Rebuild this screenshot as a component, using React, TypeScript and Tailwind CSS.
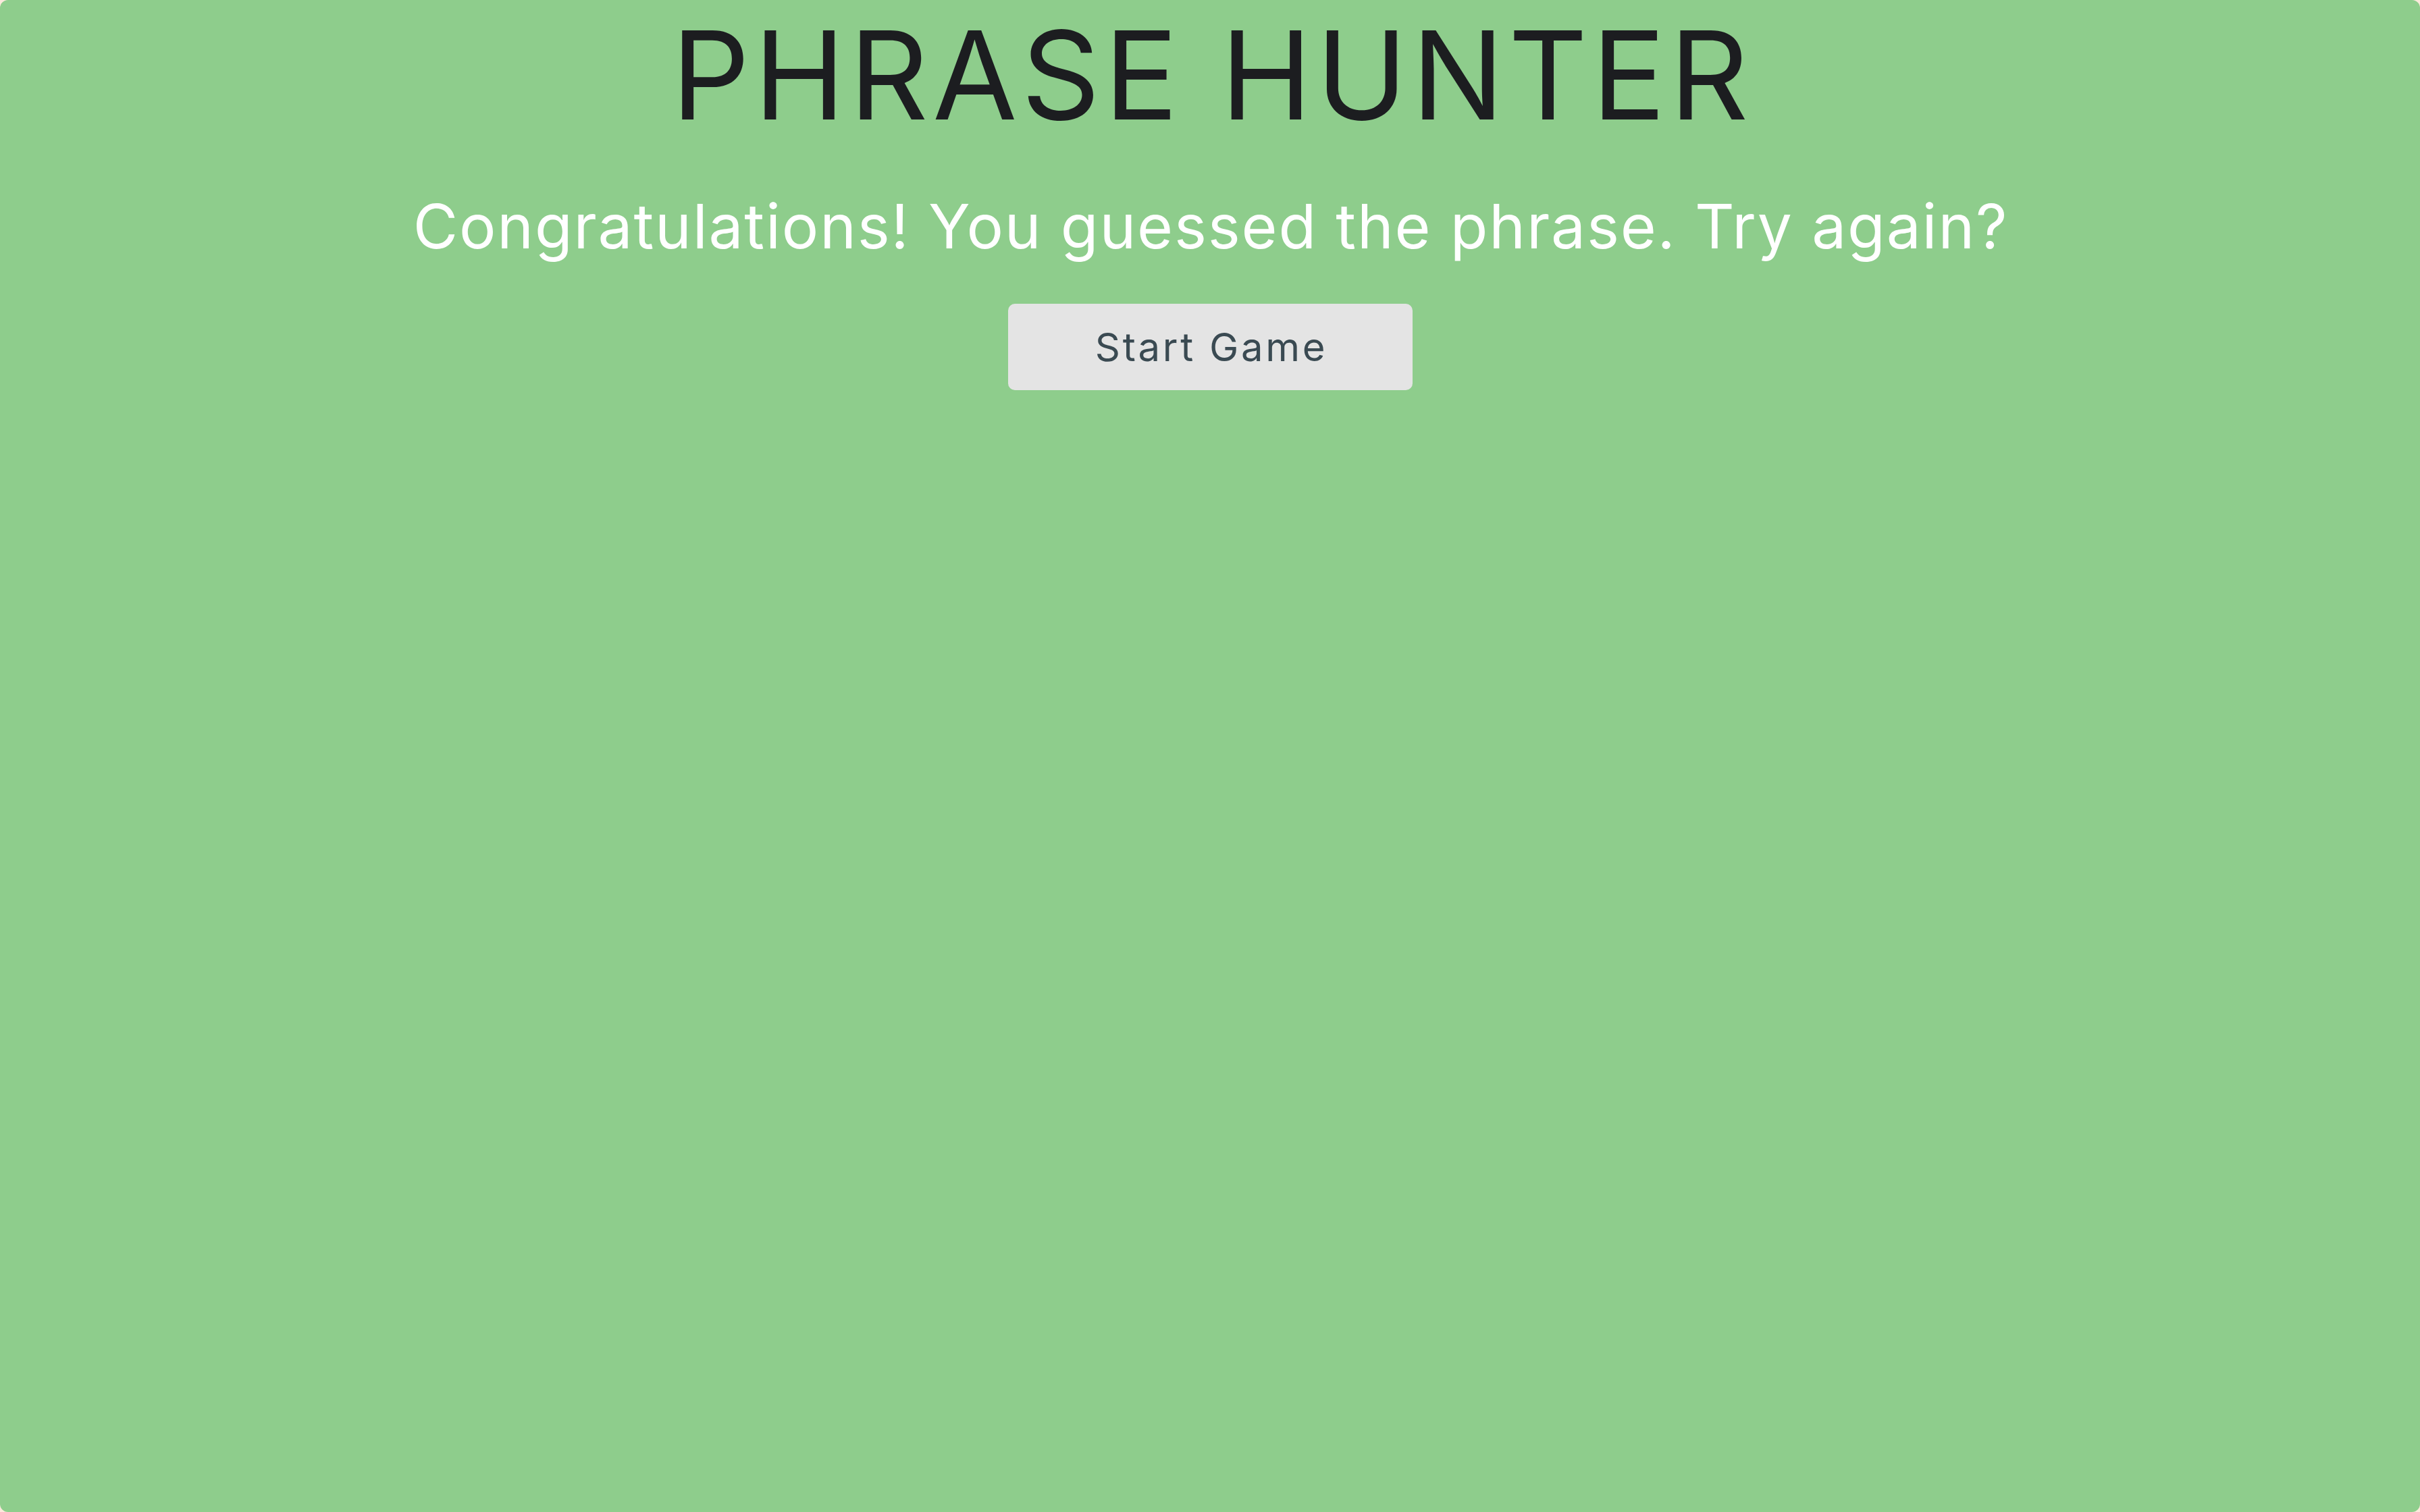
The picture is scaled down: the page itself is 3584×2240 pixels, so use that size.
export default function App() {
  return (
    <div className="min-h-screen bg-[#fbe9dc]" style={{ fontFamily: "Inter, 'Noto Sans', sans-serif" }}>
      <div className="flex h-[2240px] flex-col items-center rounded-[12px] bg-[#8ecd8c]">
        {/* Banner */}
        <h2 className="mt-[20px] pl-[6px] text-[182px] font-normal leading-none tracking-[6px] text-[#1c1d20]">
          PHRASE HUNTER
        </h2>
        <h3 className="mt-[88px] pl-[2px] text-[91px] font-normal leading-none tracking-[1.8px] text-white">
          Congratulations! You guessed the phrase. Try again?
        </h3>
        <button className="mt-[69px] h-[128px] w-[599px] rounded-[10px] bg-[#e4e4e4] pl-[4px] text-[58px] leading-none tracking-[3.7px] text-[#3a4a52]">
          Start Game
        </button>
      </div>
    </div>
  )
}
